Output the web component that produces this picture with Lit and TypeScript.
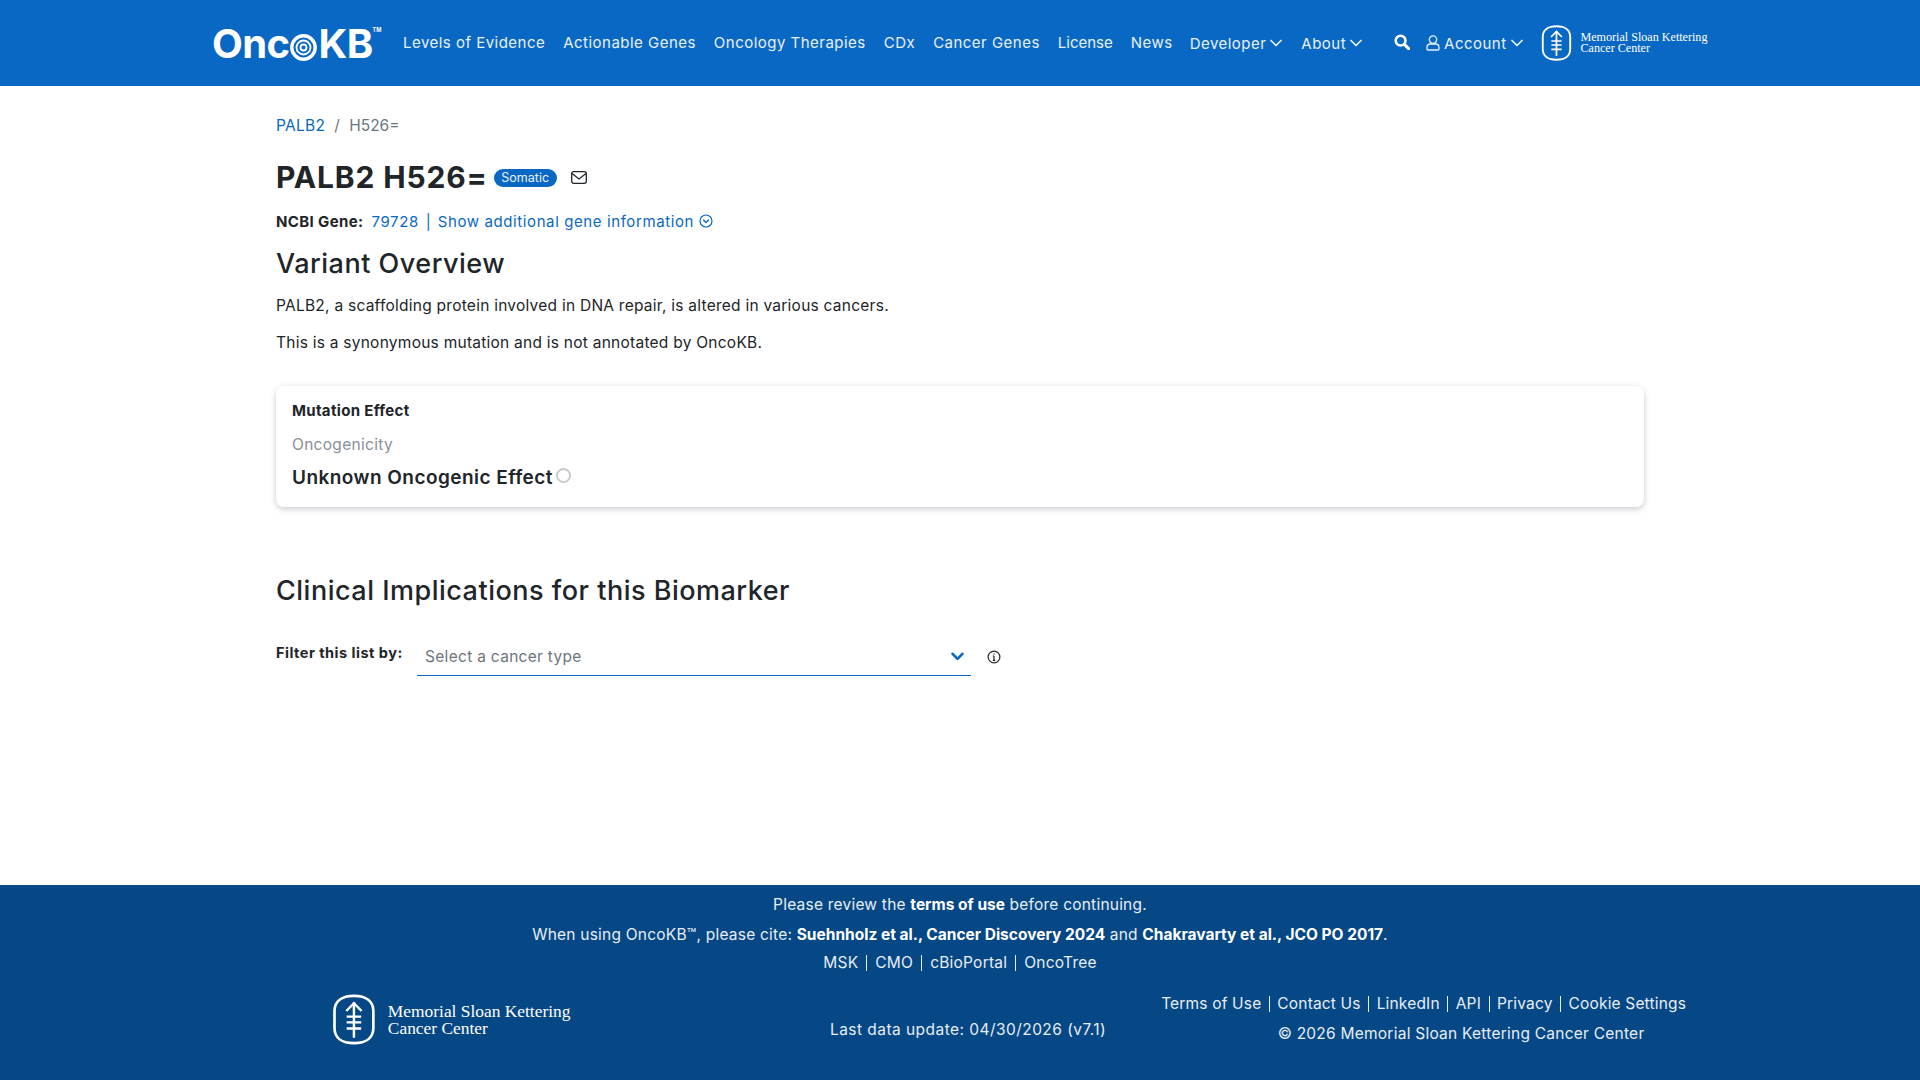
import { LitElement, html, css } from "lit";
import { customElement } from "lit/decorators.js";

const chevron = (w = 12) => html`<svg class="chev" width=${w} height=${w * 0.67} viewBox="0 0 12 8" fill="none" stroke="currentColor" stroke-width="1.7" stroke-linecap="round" stroke-linejoin="round"><path d="M1 1.5 6 6.5 11 1.5"/></svg>`;

const mskIcon = (h: number) => html`<svg width=${h * 0.86} height=${h} viewBox="0 0 36 42" fill="none" stroke="#fff">
  <path stroke-width="2.2" d="M18 1.5C28 1.5 34 6 34 14V28C34 36 28 40.5 18 40.5C8 40.5 2 36 2 28V14C2 6 8 1.5 18 1.5Z"/>
  <path stroke-width="2" d="M18 7V36"/>
  <path stroke-width="2" d="M11.7 14 18 7.6 24.3 14"/>
  <path stroke-width="1.9" d="M12 18.6H24M12 23.4H24M12 28.4H24"/>
</svg>`;

function chevronBold() {
  return html`<svg width="13" height="9" viewBox="0 0 13 9" fill="none" stroke="currentColor" stroke-width="2.6" stroke-linecap="round" stroke-linejoin="round"><path d="M1.6 1.8 6.5 6.8 11.4 1.8"/></svg>`;
}

@customElement("app-root")
export class AppRoot extends LitElement {
  static styles = css`
    :host { display: flex; flex-direction: column; min-height: 100vh; font-family: Inter, "Noto Sans", sans-serif; font-size: 15.5px; color: #212529; background: #fff; }
    a { color: inherit; text-decoration: none; }
    svg { display: block; flex: none; }

    header { height: 86px; background: #0968c3; color: #fff; display: flex; align-items: center; padding: 0 212px; box-sizing: border-box; flex: none; }
    .logo { display: flex; align-items: flex-start; font-weight: 700; font-size: 40px; line-height: 44px; letter-spacing: -0.6px; width: 167px; margin-top: 1px; }
    .logo .tm { font-size: 5.5px; line-height: 10px; margin: 3px 0 0 0; letter-spacing: 0; }
    .logo svg { margin: 12px 1px 0 1px; }
    nav { display: flex; align-items: center; gap: 18px; margin: -1px 0 0 24px; font-size: 15px; letter-spacing: 0.48px; white-space: nowrap; color: #e8f1fa; }
    nav a { display: flex; align-items: center; gap: 4px; }
    nav a.lic { letter-spacing: 0; }
    nav a.caret { margin: 1px 0 0 1px; }
    nav a.dev { margin-left: -1px; }
    .search { margin: -1px 0 0 14px; color: #fff; }
    nav a.account { margin-left: -2px; }
    .msk-h { display: flex; align-items: center; gap: 9px; font-family: "Liberation Serif", serif; font-size: 12.1px; line-height: 11px; color: #fff; letter-spacing: 0; }

    main { flex: 1; width: 1368px; margin: 0 auto; }
    .crumb { display: flex; gap: 9px; height: 24px; line-height: 24px; margin-top: 28px; font-size: 15.5px; letter-spacing: 0.3px; color: #6c757d; }
    .crumb .cur { letter-spacing: 0; }
    .crumb a, .link { color: #0968c3; }
    .title { display: flex; align-items: center; margin-top: 17px; height: 44px; }
    h1 { margin: 0; font-size: 30px; line-height: 44px; font-weight: 700; letter-spacing: 0.85px; }
    .badge { background: #0968c3; color: #e8f1fa; font-size: 12.5px; line-height: 18px; height: 18px; border-radius: 9px; padding: 0 7.5px; margin-left: 6px; margin-top: 2px; }
    .mail { margin: 1px 0 0 14px; }
    .gene { display: flex; align-items: center; height: 24px; margin-top: 10px; font-size: 15px; letter-spacing: 0.6px; white-space: nowrap; }
    .gene b { font-weight: 700; color: #212529; margin-right: 8px; letter-spacing: 0.38px; }
    .gene .sep { margin: 0 7px; color: #0968c3; letter-spacing: 0; }
    .gene svg { margin-left: 5px; color: #0968c3; }
    h2 { margin: 0; font-weight: 500; font-size: 27px; line-height: 34px; letter-spacing: 0.5px; }
    .ov { margin-top: 14px; }
    p { margin: 0; line-height: 24px; font-size: 15.5px; letter-spacing: 0.25px; }
    .p1 { margin-top: 13px; }
    .p2 { margin-top: 13px; }
    .card { margin-top: 31px; height: 121px; box-sizing: border-box; padding: 13px 16px 0; border-radius: 8px; background: #fff; box-shadow: 0 2px 6px rgba(60, 70, 90, 0.28); }
    .card .t { font-weight: 700; font-size: 15px; line-height: 24px; letter-spacing: 0.33px; }
    .card .o { color: #8a8f98; line-height: 24px; margin-top: 10px; font-size: 15.5px; letter-spacing: 0.3px; }
    .card .u { display: flex; align-items: flex-start; font-weight: 600; font-size: 19px; line-height: 28px; margin-top: 7px; letter-spacing: 0.45px; }
    .card .u i { width: 15px; height: 15px; box-sizing: border-box; border: 2px solid #c9c9c9; border-radius: 50%; margin: 4px 0 0 3px; flex: none; }
    .clin { margin-top: 67px; }
    .filter { display: flex; align-items: flex-start; margin-top: 32px; }
    .filter label { font-weight: 700; font-size: 14.5px; line-height: 24px; width: 141px; flex: none; letter-spacing: 0.5px; margin-top: 1px; }
    .select { width: 554px; height: 36px; box-sizing: border-box; border-bottom: 1.5px solid #0968c3; display: flex; align-items: center; justify-content: space-between; padding: 0 7px 2px 8px; color: #6c757d; font-size: 15.5px; letter-spacing: 0.3px; }
    .select svg { color: #0968c3; }
    .info { margin: 10px 0 0 16px; }

    footer { flex: none; height: 195px; background: #064785; color: #e6eef6; box-sizing: border-box; padding-top: 8px; font-size: 15.5px; letter-spacing: 0.22px; }
    .center { text-align: center; line-height: 24px; }
    .center b { font-weight: 700; color: #fff; letter-spacing: 0; }
    .l2 { margin-top: 6px; }
    .l3 { margin-top: 4px; }
    .bar { display: inline-block; width: 1px; height: 16px; background: #e6eef6; margin: 0 7.5px; vertical-align: -3px; }
    .l3 .bar { margin: 0 8px; }
    .bottom { display: flex; align-items: flex-start; margin-top: 12px; padding: 0 234px 0 332px; }
    .msk-f { display: flex; align-items: center; gap: 12px; width: 498px; flex: none; color: #fff; font-family: "Liberation Serif", serif; font-size: 17.4px; line-height: 17px; letter-spacing: 0; margin-top: 7px; }
    .update { margin-top: 33px; white-space: nowrap; letter-spacing: 0.45px; }
    .right { flex: 1; text-align: right; line-height: 24px; margin-top: 5px; white-space: nowrap; letter-spacing: 0.17px; }
    .copy { text-align: center; margin-top: 6px; padding-left: 130px; letter-spacing: 0.24px; }
  `;

  render() {
    return html`
      <header>
        <a class="logo">Onc<svg width="27" height="27" viewBox="0 0 27 27" fill="none" stroke="#fff"><circle cx="13.5" cy="13.5" r="11.7" stroke-width="3.4"/><circle cx="13.5" cy="13.5" r="7" stroke-width="1.8"/><circle cx="13.5" cy="13.5" r="3" stroke-width="1.8"/></svg>KB<span class="tm">TM</span></a>
        <nav>
          <a>Levels of Evidence</a>
          <a>Actionable Genes</a>
          <a>Oncology Therapies</a>
          <a>CDx</a>
          <a>Cancer Genes</a>
          <a class="lic">License</a>
          <a>News</a>
          <a class="caret dev">Developer ${chevron()}</a>
          <a class="caret">About ${chevron()}</a>
          <a class="search"><svg width="16" height="16" viewBox="0 0 16 16" fill="none" stroke="currentColor"><circle cx="6.6" cy="6.6" r="4.9" stroke-width="2.6"/><path d="M10.4 10.4 14.6 14.6" stroke-width="3" stroke-linecap="round"/></svg></a>
          <a class="caret account"><svg width="14" height="16" viewBox="0 0 14 16" fill="none" stroke="currentColor" stroke-width="1.3"><circle cx="7" cy="4.6" r="3.7"/><path d="M1 14V12.4C1 10.4 2.5 9 4.4 9H9.6C11.5 9 13 10.4 13 12.4V14C13 14.6 12.6 15 12 15H2C1.4 15 1 14.6 1 14Z"/></svg>Account ${chevron()}</a>
          <a class="msk-h">${mskIcon(36)}<span>Memorial Sloan Kettering<br />Cancer Center</span></a>
        </nav>
      </header>
      <main>
        <div class="crumb"><a>PALB2</a><span>/</span><span class="cur">H526=</span></div>
        <div class="title">
          <h1>PALB2 H526=</h1>
          <span class="badge">Somatic</span>
          <svg class="mail" width="16" height="13" viewBox="0 0 16 13" fill="none" stroke="#212529" stroke-width="1.3"><rect x="0.7" y="0.7" width="14.6" height="11.6" rx="2"/><path d="M1 2.5 8 8 15 2.5"/></svg>
        </div>
        <div class="gene"><b>NCBI Gene:</b><a class="link">79728</a><span class="sep">|</span><a class="link">Show additional gene information</a><svg width="14" height="14" viewBox="0 0 14 14" fill="none" stroke="currentColor" stroke-width="1.2"><circle cx="7" cy="7" r="6"/><path d="M4.2 5.8 7 8.6 9.8 5.8" stroke-width="1.4"/></svg></div>
        <h2 class="ov">Variant Overview</h2>
        <p class="p1">PALB2, a scaffolding protein involved in DNA repair, is altered in various cancers.</p>
        <p class="p2">This is a synonymous mutation and is not annotated by OncoKB.</p>
        <section class="card">
          <div class="t">Mutation Effect</div>
          <div class="o">Oncogenicity</div>
          <div class="u">Unknown Oncogenic Effect<i></i></div>
        </section>
        <h2 class="clin">Clinical Implications for this Biomarker</h2>
        <div class="filter">
          <label>Filter this list by:</label>
          <div class="select"><span>Select a cancer type</span>${chevronBold()}</div>
          <svg class="info" width="14" height="14" viewBox="0 0 14 14" fill="none" stroke="#212529"><circle cx="7" cy="7" r="5.9" stroke-width="1.2"/><path d="M7 6V10.4M5.8 10.4H8.2M5.8 6H7" stroke-width="1.2"/><path d="M7 3.4V4.6" stroke-width="1.4"/></svg>
        </div>
      </main>
      <footer>
        <div class="center">Please review the <b>terms of use</b> before continuing.</div>
        <div class="center l2">When using OncoKB™, please cite: <b>Suehnholz et al., Cancer Discovery 2024</b> and <b>Chakravarty et al., JCO PO 2017</b>.</div>
        <div class="center l3">MSK<span class="bar"></span>CMO<span class="bar"></span>cBioPortal<span class="bar"></span>OncoTree</div>
        <div class="bottom">
          <div class="msk-f">${mskIcon(51)}<span>Memorial Sloan Kettering<br />Cancer Center</span></div>
          <div class="update">Last data update: 04/30/2026 (v7.1)</div>
          <div class="right">
            <div>Terms of Use<span class="bar"></span>Contact Us<span class="bar"></span>LinkedIn<span class="bar"></span>API<span class="bar"></span>Privacy<span class="bar"></span>Cookie Settings</div>
            <div class="copy">© 2026 Memorial Sloan Kettering Cancer Center</div>
          </div>
        </div>
      </footer>
    `;
  }
}
